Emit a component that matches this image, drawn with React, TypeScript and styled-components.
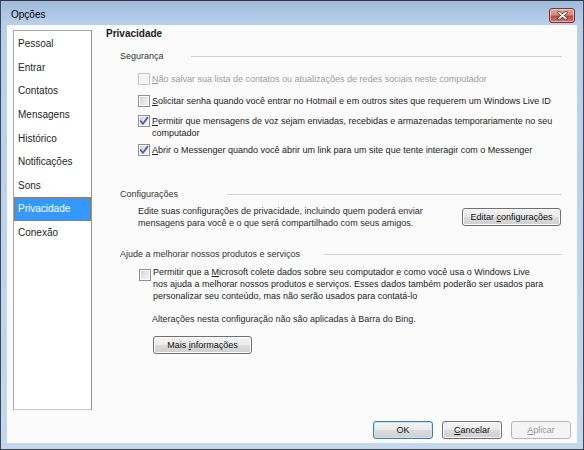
import React from "react";
import styled, { createGlobalStyle } from "styled-components";

const GlobalStyle = createGlobalStyle`
  html, body {
    margin: 0;
    padding: 0;
    background: #ffffff;
  }
  body {
    font-family: "Liberation Sans", Arial, sans-serif;
    -webkit-font-smoothing: antialiased;
  }
  * {
    box-sizing: border-box;
  }
`;

const Window = styled.div`
  width: 584px;
  height: 450px;
  display: flex;
  flex-direction: column;
  border: 1px solid #3f4852;
  border-top-color: #2f3740;
  background: linear-gradient(#9fbadb 0px, #b7cfe9 22px, #c3d8ee 100%);
  padding: 0 6px 6px 6px;
`;

const TitleBar = styled.div`
  height: 24px;
  display: flex;
  align-items: flex-start;
  justify-content: space-between;
  padding-left: 4px;
`;

const TitleText = styled.div`
  margin-top: 8px;
  font-size: 10px;
  line-height: 12px;
  color: #000;
`;

const CloseButton = styled.div`
  width: 26px;
  height: 15px;
  margin-top: 7px;
  margin-right: 2px;
  border: 1px solid #6b3a35;
  border-radius: 3px;
  background: linear-gradient(#e9a999 0%, #d98a7a 45%, #c2473a 55%, #d6766a 100%);
  box-shadow: inset 0 0 0 1px rgba(255, 220, 210, 0.55);
  display: flex;
  align-items: center;
  justify-content: center;
`;

const Client = styled.div`
  flex: 1;
  display: flex;
  flex-direction: column;
  background: #fbfbfb;
  padding: 3px 6px 4px 6px;
`;

const MainRow = styled.div`
  display: flex;
  height: 382px;
`;

const Sidebar = styled.ul`
  list-style: none;
  margin: 2px 0 0 0;
  padding: 1px 0 0 0;
  width: 79px;
  height: 380px;
  background: #ffffff;
  border: 1px solid #a3a7ae;
  border-right-color: #8d939c;
  border-bottom-color: #c4c5c9;
`;

const SideItem = styled.li<{ $active?: boolean }>`
  height: 23.6px;
  display: flex;
  align-items: center;
  padding-left: 4px;
  font-size: 10px;
  color: ${(p) => (p.$active ? "#ffffff" : "#1e1e1e")};
  background: ${(p) => (p.$active ? "#3399ff" : "transparent")};
  box-shadow: ${(p) => (p.$active ? "inset 0 0 0 1px #a9773f" : "none")};
`;

const Panel = styled.div`
  flex: 1;
  display: flex;
  flex-direction: column;
  margin-left: 14px;
  padding-right: 9px;
`;

const PageTitle = styled.div`
  font-size: 10px;
  font-weight: bold;
  line-height: 12px;
  color: #1a1a1a;
`;

const GroupHeader = styled.div<{ $top: number }>`
  display: flex;
  align-items: center;
  height: 12px;
  margin-top: ${(p) => p.$top}px;
  padding-left: 14px;
`;

const GroupLabel = styled.div<{ $width: number }>`
  width: ${(p) => p.$width}px;
  font-size: 9px;
  line-height: 12px;
  color: #333333;
  white-space: nowrap;
`;

const GroupLine = styled.div`
  flex: 1;
  height: 1px;
  background: #d2d2d2;
`;

const CheckRow = styled.div<{ $top: number; $indent?: number }>`
  display: flex;
  align-items: flex-start;
  margin-top: ${(p) => p.$top}px;
  padding-left: ${(p) => p.$indent ?? 32}px;
`;

const Box = styled.span<{ $disabled?: boolean; $offset?: number }>`
  flex: none;
  width: 12px;
  height: 12px;
  margin-top: ${(p) => p.$offset ?? 0}px;
  margin-right: 2px;
  border: 1px solid ${(p) => (p.$disabled ? "#c6c6c6" : "#8f8f8f")};
  background: ${(p) =>
    p.$disabled
      ? "#f4f4f4"
      : "linear-gradient(135deg, #c9cdd3 0%, #e4e6e8 50%, #f6f6f6 100%)"};
  box-shadow: inset 0 0 0 1px ${(p) => (p.$disabled ? "#f9f9f9" : "#fbfbfb")};
  display: flex;
  align-items: center;
  justify-content: center;
`;

const CheckText = styled.div<{ $disabled?: boolean }>`
  font-size: 9px;
  line-height: 12px;
  white-space: nowrap;
  color: ${(p) => (p.$disabled ? "#9c9c9c" : "#222222")};
`;

const Key = styled.span`
  text-decoration: underline;
`;

const ConfigRow = styled.div`
  display: flex;
  justify-content: space-between;
  align-items: flex-start;
  margin-top: 6px;
  padding-left: 32px;
  padding-right: 1px;
`;

const Paragraph = styled.div<{ $top?: number; $indent?: number }>`
  font-size: 9px;
  line-height: 11.5px;
  color: #2a2a2a;
  white-space: nowrap;
  margin-top: ${(p) => p.$top ?? 0}px;
  padding-left: ${(p) => p.$indent ?? 0}px;
`;

const Button = styled.button<{ $width?: number; $default?: boolean; $top?: number; $left?: number }>`
  flex: none;
  align-self: flex-start;
  width: ${(p) => p.$width ?? 60}px;
  height: 18px;
  margin: ${(p) => p.$top ?? 0}px 0 0 ${(p) => p.$left ?? 0}px;
  padding: 0;
  font-family: "Liberation Sans", Arial, sans-serif;
  font-size: 9px;
  line-height: 16px;
  color: #111111;
  border: 1px solid ${(p) => (p.$default ? "#3c7fb1" : "#707070")};
  border-radius: 3px;
  background: linear-gradient(#f3f3f3 0%, #ececec 48%, #dcdcdc 52%, #cfcfcf 100%);
  box-shadow: inset 0 0 0 1px ${(p) => (p.$default ? "#c4e5f6" : "#fbfbfb")};

  &:disabled {
    color: #9a9a9a;
    border-color: #b5b8ba;
    background: #f4f4f4;
    box-shadow: none;
  }
`;

const Footer = styled.div`
  display: flex;
  justify-content: flex-end;
  gap: 9px;
  margin-top: 11px;
`;

const CheckMark = () => (
  <svg width="10" height="10" viewBox="0 0 10 10">
    <path d="M1.6 5 L4 7.8 L8.6 1.6" fill="none" stroke="#4264a8" strokeWidth="1.8" strokeLinecap="round" strokeLinejoin="round" />
  </svg>
);

const CloseGlyph = () => (
  <svg width="11" height="9" viewBox="0 0 11 9">
    <path d="M2 1.5 L9 7.5 M9 1.5 L2 7.5" stroke="#5b2520" strokeWidth="3.2" strokeLinecap="round" />
    <path d="M2 1.5 L9 7.5 M9 1.5 L2 7.5" stroke="#ffffff" strokeWidth="1.7" strokeLinecap="round" />
  </svg>
);

const pages = [
  "Pessoal",
  "Entrar",
  "Contatos",
  "Mensagens",
  "Histórico",
  "Notificações",
  "Sons",
  "Privacidade",
  "Conexão",
];

const App: React.FC = () => {
  return (
    <>
      <GlobalStyle />
      <Window>
        <TitleBar>
          <TitleText>Opções</TitleText>
          <CloseButton>
            <CloseGlyph />
          </CloseButton>
        </TitleBar>
        <Client>
          <MainRow>
            <Sidebar>
              {pages.map((p) => (
                <SideItem key={p} $active={p === "Privacidade"}>
                  {p}
                </SideItem>
              ))}
            </Sidebar>
            <Panel>
              <PageTitle>Privacidade</PageTitle>

              <GroupHeader $top={10}>
                <GroupLabel $width={71}>Segurança</GroupLabel>
                <GroupLine />
              </GroupHeader>
              <CheckRow $top={11}>
                <Box $disabled />
                <CheckText $disabled>
                  <Key>N</Key>ão salvar sua lista de contatos ou atualizações de redes sociais neste computador
                </CheckText>
              </CheckRow>
              <CheckRow $top={10}>
                <Box />
                <CheckText>
                  <Key>S</Key>olicitar senha quando você entrar no Hotmail e em outros sites que requerem um Windows Live ID
                </CheckText>
              </CheckRow>
              <CheckRow $top={8}>
                <Box>
                  <CheckMark />
                </Box>
                <CheckText>
                  <Key>P</Key>ermitir que mensagens de voz sejam enviadas, recebidas e armazenadas temporariamente no seu
                  <br />
                  computador
                </CheckText>
              </CheckRow>
              <CheckRow $top={5}>
                <Box>
                  <CheckMark />
                </Box>
                <CheckText>
                  <Key>A</Key>brir o Messenger quando você abrir um link para um site que tente interagir com o Messenger
                </CheckText>
              </CheckRow>

              <GroupHeader $top={32}>
                <GroupLabel $width={107}>Configurações</GroupLabel>
                <GroupLine />
              </GroupHeader>
              <ConfigRow>
                <Paragraph>
                  Edite suas configurações de privacidade, incluindo quem poderá enviar
                  <br />
                  mensagens para você e o que será compartilhado com seus amigos.
                </Paragraph>
                <Button $width={99} $top={2}>
                  Editar <Key>c</Key>onfigurações
                </Button>
              </ConfigRow>

              <GroupHeader $top={19}>
                <GroupLabel $width={204}>Ajude a melhorar nossos produtos e serviços</GroupLabel>
                <GroupLine />
              </GroupHeader>
              <CheckRow $top={6} $indent={33}>
                <Box $offset={3} />
                <CheckText>
                  Permitir que a <Key>M</Key>icrosoft colete dados sobre seu computador e como você usa o Windows Live
                  <br />
                  nos ajuda a melhorar nossos produtos e serviços. Esses dados também poderão ser usados para
                  <br />
                  personalizar seu conteúdo, mas não serão usados para contatá-lo
                </CheckText>
              </CheckRow>
              <Paragraph $top={12} $indent={46}>
                Alterações nesta configuração não são aplicadas à Barra do Bing.
              </Paragraph>
              <Button $width={99} $top={10} $left={47}>
                Mais <Key>i</Key>nformações
              </Button>
            </Panel>
          </MainRow>
          <Footer>
            <Button $default>OK</Button>
            <Button>
              <Key>C</Key>ancelar
            </Button>
            <Button disabled>
              <Key>A</Key>plicar
            </Button>
          </Footer>
        </Client>
      </Window>
    </>
  );
};

export default App;
